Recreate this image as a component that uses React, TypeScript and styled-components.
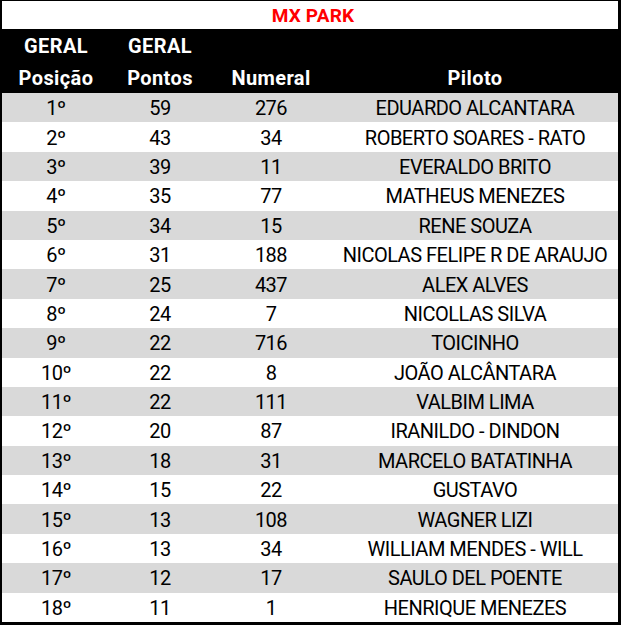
import React from 'react';
import styled, { createGlobalStyle } from 'styled-components';

const GlobalStyle = createGlobalStyle`
  html, body {
    margin: 0;
    padding: 0;
    background: #ffffff;
  }
  body {
    font-family: Roboto, "Liberation Sans", Arial, sans-serif;
  }
`;

const Sheet = styled.div`
  width: 621px;
  height: 625px;
  box-sizing: border-box;
  border-top: 1px solid #000;
  border-left: 2px solid #000;
  border-right: 3px solid #000;
  border-bottom: 3px solid #000;
  display: flex;
  flex-direction: column;
`;

const Title = styled.div`
  height: 28px;
  display: flex;
  align-items: center;
  justify-content: center;
  color: #ff0000;
  font-weight: 700;
  font-size: 19px;
  letter-spacing: 0.2px;
  padding-left: 6px;
`;

const Grid = styled.div`
  display: grid;
  grid-template-columns: 108px 100px 122px 1fr;
`;

const Header = styled(Grid)`
  background: #000;
  color: #fff;
  height: 64px;
  grid-template-rows: 33px 31px;
  font-weight: 700;
  font-size: 20px;
  letter-spacing: 0.4px;
`;

const HeadCell = styled.div`
  display: flex;
  align-items: center;
  justify-content: center;
`;

const Body = styled.div`
  display: grid;
  grid-template-rows: repeat(18, 1fr);
  flex: 1;
`;

const Row = styled(Grid)<{ $shaded: boolean }>`
  background: ${(p) => (p.$shaded ? '#d9d9d9' : '#ffffff')};
  color: #000;
  font-size: 20px;
  letter-spacing: -0.5px;
`;

const Cell = styled.div`
  display: flex;
  align-items: center;
  justify-content: center;
  white-space: nowrap;
  padding-top: 1px;
`;

const rows: [string, number, number, string][] = [
  ['1º', 59, 276, 'EDUARDO ALCANTARA'],
  ['2º', 43, 34, 'ROBERTO SOARES - RATO'],
  ['3º', 39, 11, 'EVERALDO BRITO'],
  ['4º', 35, 77, 'MATHEUS MENEZES'],
  ['5º', 34, 15, 'RENE SOUZA'],
  ['6º', 31, 188, 'NICOLAS FELIPE R DE ARAUJO'],
  ['7º', 25, 437, 'ALEX ALVES'],
  ['8º', 24, 7, 'NICOLLAS SILVA'],
  ['9º', 22, 716, 'TOICINHO'],
  ['10º', 22, 8, 'JOÃO ALCÂNTARA'],
  ['11º', 22, 111, 'VALBIM LIMA'],
  ['12º', 20, 87, 'IRANILDO - DINDON'],
  ['13º', 18, 31, 'MARCELO BATATINHA'],
  ['14º', 15, 22, 'GUSTAVO'],
  ['15º', 13, 108, 'WAGNER LIZI'],
  ['16º', 13, 34, 'WILLIAM MENDES - WILL'],
  ['17º', 12, 17, 'SAULO DEL POENTE'],
  ['18º', 11, 1, 'HENRIQUE MENEZES'],
];

export default function App() {
  return (
    <>
      <GlobalStyle />
      <Sheet>
        <Title>MX PARK</Title>
        <Header>
          <HeadCell>GERAL</HeadCell>
          <HeadCell>GERAL</HeadCell>
          <HeadCell />
          <HeadCell />
          <HeadCell>Posição</HeadCell>
          <HeadCell>Pontos</HeadCell>
          <HeadCell>Numeral</HeadCell>
          <HeadCell>Piloto</HeadCell>
        </Header>
        <Body>
          {rows.map(([pos, pts, num, name], i) => (
            <Row key={pos} $shaded={i % 2 === 0}>
              <Cell>{pos}</Cell>
              <Cell>{pts}</Cell>
              <Cell>{num}</Cell>
              <Cell>{name}</Cell>
            </Row>
          ))}
        </Body>
      </Sheet>
    </>
  );
}
